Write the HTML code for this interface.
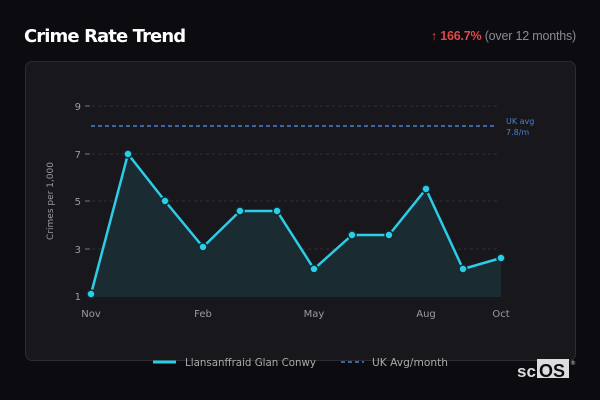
<!DOCTYPE html>
<html><head><style>
body{margin:0;width:600px;height:400px;background:#0c0b10;font-family:"Liberation Sans","DejaVu Sans",sans-serif;overflow:hidden;position:relative}
.t{position:absolute;left:24px;top:26px;color:#fff;font:bold 18px "DejaVu Sans",sans-serif;letter-spacing:-0.9px}
.r{position:absolute;right:24px;top:29px;font-size:12.5px;color:#8a8a90;letter-spacing:-0.2px}
.r b{color:#e04848}
.card{position:absolute;left:25px;top:61px;width:549px;height:298px;background:#18181c;border:1px solid #2c2c31;border-radius:7px}
</style></head><body>
<div class="t">Crime Rate Trend</div>
<div class="r"><b>↑ 166.7%</b> (over 12 months)</div>
<div class="card"></div>
<svg style="position:absolute;left:0;top:0" width="600" height="400" font-family="DejaVu Sans,sans-serif">
<g stroke="#2e2e34" stroke-dasharray="3,3" stroke-width="1">
<line x1="92" x2="500" y1="106" y2="106"/><line x1="92" x2="500" y1="154" y2="154"/><line x1="92" x2="500" y1="201" y2="201"/><line x1="92" x2="500" y1="249" y2="249"/></g>
<g fill="#9a9aa0" font-size="10" text-anchor="end"><text x="81" y="110">9</text><text x="81" y="158">7</text><text x="81" y="205">5</text><text x="81" y="253">3</text><text x="81" y="300">1</text></g>
<g stroke="#777" stroke-width="1"><line x1="85" x2="90" y1="106" y2="106"/><line x1="85" x2="90" y1="154" y2="154"/><line x1="85" x2="90" y1="201" y2="201"/><line x1="85" x2="90" y1="249" y2="249"/></g>
<text x="53" y="201" fill="#9a9aa0" font-size="9" text-anchor="middle" transform="rotate(-90 53 201)">Crimes per 1,000</text>
<g fill="#9a9aa0" font-size="10" text-anchor="middle"><text x="91" y="317">Nov</text><text x="203" y="317">Feb</text><text x="314" y="317">May</text><text x="426" y="317">Aug</text><text x="501" y="317">Oct</text></g>
<line x1="91" x2="497" y1="126" y2="126" stroke="#4a7fd6" stroke-width="1.5" stroke-dasharray="4,3"/>
<text x="506" y="124" fill="#4a7fd6" font-size="8">UK avg</text><text x="506" y="135" fill="#4a7fd6" font-size="8">7.8/m</text>
<path d="M91,294 L128,154 L165,201 L203,247 L240,211 L277,211 L314,269 L352,235 L389,235 L426,189 L463,269 L501,258 L501,297 L91,297Z" fill="#1a2b31"/>
<path d="M91,294 L128,154 L165,201 L203,247 L240,211 L277,211 L314,269 L352,235 L389,235 L426,189 L463,269 L501,258" fill="none" stroke="#2ccde6" stroke-width="2.5" stroke-linejoin="round"/>
<g fill="#2ccde6" stroke="#0f2a30" stroke-width="1.5">
<circle cx="91" cy="294" r="4"/><circle cx="128" cy="154" r="4"/><circle cx="165" cy="201" r="4"/><circle cx="203" cy="247" r="4"/><circle cx="240" cy="211" r="4"/><circle cx="277" cy="211" r="4"/><circle cx="314" cy="269" r="4"/><circle cx="352" cy="235" r="4"/><circle cx="389" cy="235" r="4"/><circle cx="426" cy="189" r="4"/><circle cx="463" cy="269" r="4"/><circle cx="501" cy="258" r="4"/></g>
<line x1="153" x2="176" y1="362" y2="362" stroke="#2ccde6" stroke-width="3"/>
<text x="185" y="366" fill="#aaa" font-size="11" textLength="131" lengthAdjust="spacingAndGlyphs">Llansanffraid Glan Conwy</text>
<line x1="341" x2="364" y1="362" y2="362" stroke="#4a7fd6" stroke-width="1.5" stroke-dasharray="4,3"/>
<text x="372" y="366" fill="#aaa" font-size="11" textLength="76" lengthAdjust="spacingAndGlyphs">UK Avg/month</text>
<text x="517" y="377" fill="#ddd" font-size="17" font-weight="bold" font-family="Liberation Sans,sans-serif">sc</text>
<rect x="537" y="359" width="32" height="19" fill="#ddd"/>
<text x="539" y="377" fill="#0c0b10" font-size="18" font-weight="bold" font-family="Liberation Sans,sans-serif">OS</text>
<text x="570" y="365" fill="#ccc" font-size="6">®</text>
</svg>
</body></html>
